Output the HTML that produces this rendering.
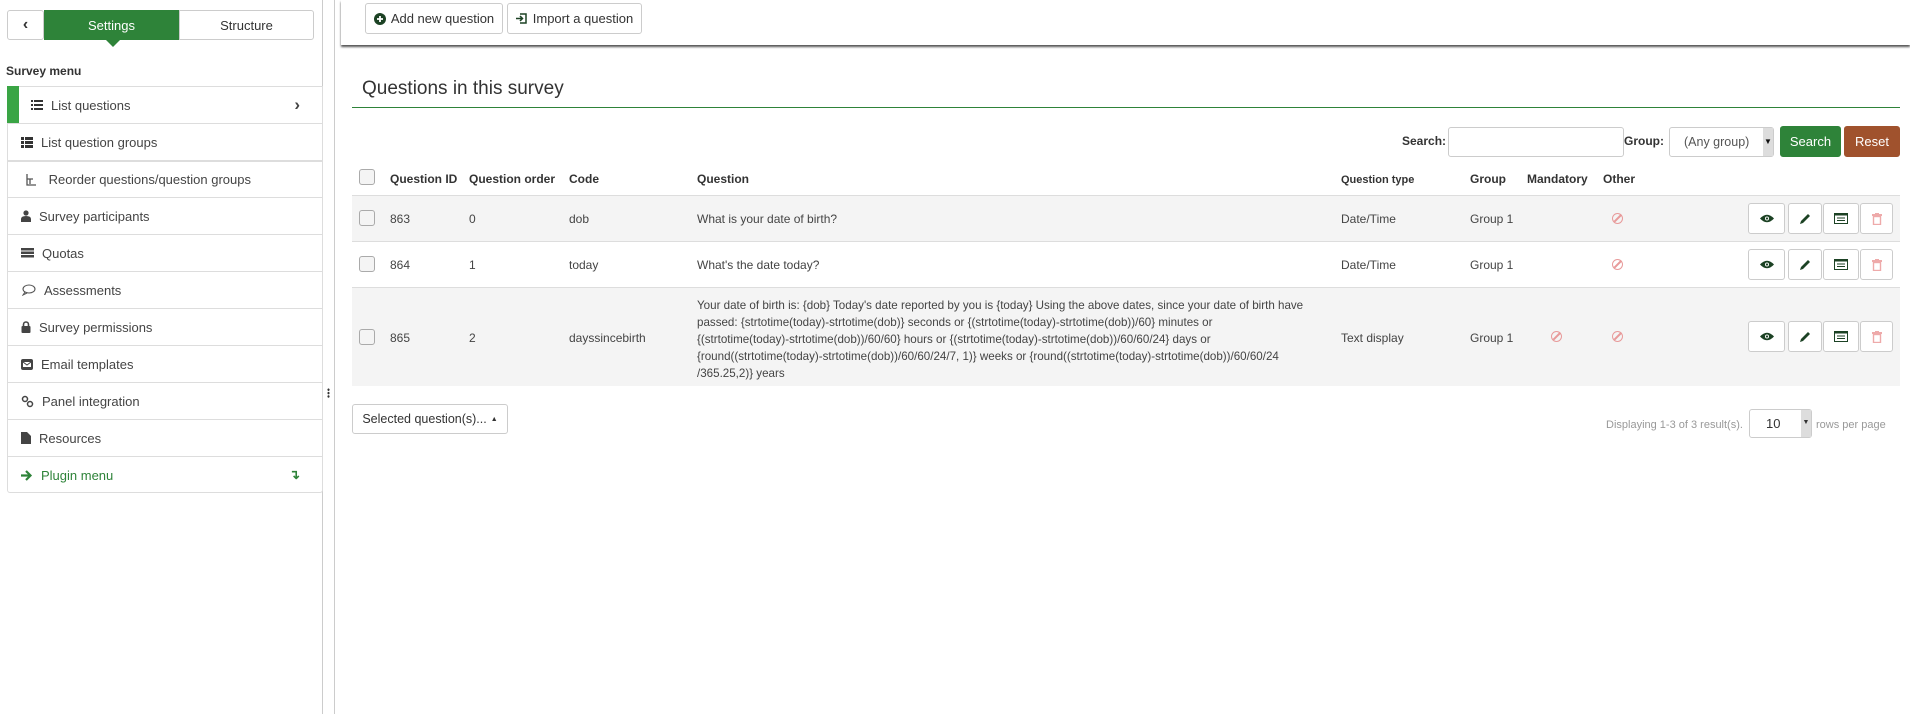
<!DOCTYPE html>
<html><head><meta charset="utf-8"><style>
*{box-sizing:border-box;margin:0;padding:0}
body{width:1910px;height:714px;background:#fff;font-family:"Liberation Sans",sans-serif;color:#333;position:relative;overflow:hidden;font-size:13px}
.a{position:absolute}
.btn{position:absolute;border:1px solid #ccc;border-radius:3px;background:#fff;display:flex;align-items:center;justify-content:center;font-size:13px;color:#333}
.mi{position:absolute;left:7px;width:315px;height:37px;border-top:1px solid #ddd;display:flex;align-items:center;padding-left:15px;font-size:13px;color:#444}
.mi svg{margin-right:8px}
.th{position:absolute;top:172px;font-weight:bold;font-size:12px;color:#333}
.row{position:absolute;left:352px;width:1548px;border-top:1px solid #ddd}
.c{position:absolute;font-size:12px;color:#444}
.cb{position:absolute;left:359px;width:16px;height:16px;border:1px solid #aaa;border-radius:3px;background:#f4f4f4}
.ab{position:absolute;height:31px;border:1px solid #ccc;border-radius:3px;background:#fff;display:flex;align-items:center;justify-content:center}
.no{position:absolute;width:11px;height:11px;border:1.5px solid #e89a9a;border-radius:50%}
.no:after{content:"";position:absolute;left:3.5px;top:-1px;width:1.5px;height:10px;background:#e89a9a;transform:rotate(45deg)}
</style></head><body>

<div class="a" style="left:322px;top:0;width:1px;height:714px;background:#ccc"></div>
<div class="a" style="left:334px;top:0;width:1px;height:714px;background:#ccc"></div>
<div class="a" style="left:327px;top:388px;width:3px;height:10px;background:radial-gradient(circle,#333 1px,transparent 1.3px) 0 0/3px 3.4px"></div>
<div class="btn" style="left:7px;top:10px;width:37px;height:30px;font-weight:bold;font-size:16px">&#8249;</div>
<div class="btn" style="left:44px;top:10px;width:135px;height:30px;background:#2e8339;border-color:#2e8339;color:#fff;border-radius:0">Settings</div>
<div class="a" style="left:106px;top:40px;width:0;height:0;border-left:7px solid transparent;border-right:7px solid transparent;border-top:7px solid #2e8339"></div>
<div class="btn" style="left:179px;top:10px;width:135px;height:30px;border-radius:0 3px 3px 0">Structure</div>
<div class="a" style="left:6px;top:64px;font-weight:bold;font-size:12px">Survey menu</div>

<div class="a" style="left:7px;top:86px;width:316px;height:407px;border:1px solid #ddd;border-top:0;border-radius:0 0 3px 3px"></div>
<div class="mi" style="top:86px;padding-left:24px"><svg width="12" height="11"><rect x="0" y="0" width="2" height="2" fill="#333"/><rect x="3" y="0" width="9" height="2" fill="#333"/><rect x="0" y="4" width="2" height="2" fill="#333"/><rect x="3" y="4" width="9" height="2" fill="#333"/><rect x="0" y="8" width="2" height="2" fill="#333"/><rect x="3" y="8" width="9" height="2" fill="#333"/></svg>List questions<span style="position:absolute;right:22px;font-weight:bold;font-size:17px">&#8250;</span></div>
<div class="a" style="left:7px;top:86px;width:12px;height:37px;background:#3aa545"></div>
<div class="mi" style="top:123px;padding-left:14px"><svg width="12" height="11"><rect x="0" y="0" width="3" height="3" fill="#333"/><rect x="4" y="0" width="8" height="3" fill="#333"/><rect x="0" y="4" width="3" height="3" fill="#333"/><rect x="4" y="4" width="8" height="3" fill="#333"/><rect x="0" y="8" width="3" height="3" fill="#333"/><rect x="4" y="8" width="8" height="3" fill="#333"/></svg>List question groups</div>
<div class="mi" style="top:160px;border-top:2px solid #ddd;padding-left:18px"><svg width="12" height="12"><path d="M2 0v11h9M2 5h6M5 5v5" stroke="#555" fill="none" stroke-width="1.3"/></svg>&nbsp;Reorder questions/question groups</div>
<div class="mi" style="top:197px;padding-left:14px"><svg width="10" height="12"><circle cx="5" cy="3" r="2.6" fill="#444"/><path d="M0 12v-3q0-3 5-3t5 3v3z" fill="#444"/></svg>Survey participants</div>
<div class="mi" style="top:234px;padding-left:14px"><svg width="13" height="10"><rect x="0" y="0" width="13" height="2.5" fill="#444"/><rect x="0" y="3.5" width="13" height="2.5" fill="#444"/><rect x="0" y="7" width="13" height="2.5" fill="#444"/></svg>Quotas</div>
<div class="mi" style="top:271px;padding-left:15px"><svg width="14" height="12"><ellipse cx="7" cy="5" rx="6" ry="4" fill="none" stroke="#555" stroke-width="1.1"/><path d="M3 8l-2 3 4-2" fill="none" stroke="#555"/></svg>Assessments</div>
<div class="mi" style="top:308px;padding-left:14px"><svg width="10" height="12"><path d="M2.5 5V3.5a2.5 2.5 0 0 1 5 0V5" fill="none" stroke="#444" stroke-width="1.6"/><rect x="0.5" y="5" width="9" height="7" rx="1" fill="#444"/></svg>Survey permissions</div>
<div class="mi" style="top:345px;padding-left:14px"><svg width="12" height="11"><rect x="0" y="0" width="12" height="11" rx="2" fill="#444"/><rect x="2" y="3" width="8" height="5" fill="#fff"/><path d="M2 3l4 3 4-3" stroke="#444" fill="none"/></svg>Email templates</div>
<div class="mi" style="top:382px;padding-left:14px"><svg width="13" height="13"><circle cx="4" cy="4" r="2.5" fill="none" stroke="#444" stroke-width="1.5"/><circle cx="9" cy="9" r="2.5" fill="none" stroke="#444" stroke-width="1.5"/></svg>Panel integration</div>
<div class="mi" style="top:419px;padding-left:14px"><svg width="10" height="12"><path d="M0 0h6l4 4v8H0z" fill="#444"/></svg>Resources</div>
<div class="mi" style="top:456px;padding-left:14px;color:#2e8339"><svg width="12" height="11"><path d="M0 5.5h9M5 1l4.5 4.5L5 10" stroke="#2e8339" stroke-width="2.2" fill="none"/></svg>Plugin menu<span style="position:absolute;right:22px;font-weight:bold;font-size:13px">&#8628;</span></div>

<div class="a" style="left:341px;top:0;width:1569px;height:45px;background:#fff;box-shadow:0 2px 2px #555"></div>
<div class="btn" style="left:365px;top:3px;width:138px;height:31px"><svg width="12" height="12" style="margin-right:5px"><circle cx="6" cy="6" r="6" fill="#1c4224"/><path d="M6 3v6M3 6h6" stroke="#fff" stroke-width="1.8"/></svg>Add new question</div>
<div class="btn" style="left:507px;top:3px;width:135px;height:31px"><svg width="12" height="13" style="margin-right:5px"><path d="M4 2h6v9H4" fill="none" stroke="#1c4224" stroke-width="1.5"/><path d="M0 6.5h6M4 4l2.5 2.5L4 9" stroke="#1c4224" stroke-width="1.5" fill="none"/></svg>Import a question</div>

<div class="a" style="left:362px;top:78px;font-size:19px;font-weight:500;color:#333">Questions in this survey</div>
<div class="a" style="left:352px;top:107px;width:1548px;height:1px;background:#2e8339"></div>

<div class="a" style="left:1402px;top:134px;font-weight:bold;font-size:12px">Search:</div>
<div class="a" style="left:1448px;top:127px;width:176px;height:30px;border:1px solid #ccc;border-radius:3px"></div>
<div class="a" style="left:1624px;top:134px;font-weight:bold;font-size:12px">Group:</div>
<div class="a" style="left:1669px;top:127px;width:105px;height:30px;border:1px solid #ccc;border-radius:3px;font-size:12.5px;color:#555;padding:7px 0 0 14px">(Any group)<span style="position:absolute;right:0;top:0;width:10px;height:28px;background:#ddd;font-size:8px;padding-top:9px;text-align:center;color:#111">&#9660;</span></div>
<div class="btn" style="left:1780px;top:126px;width:61px;height:31px;background:#2e8339;border-color:#2e8339;color:#fff;font-size:13px">Search</div>
<div class="btn" style="left:1844px;top:126px;width:56px;height:31px;background:#a0522d;border-color:#a0522d;color:#fff;font-size:13px">Reset</div>

<div class="cb" style="top:169px"></div>
<div class="th" style="left:390px">Question ID</div>
<div class="th" style="left:469px">Question order</div>
<div class="th" style="left:569px">Code</div>
<div class="th" style="left:697px">Question</div>
<div class="th" style="left:1341px;font-size:11px;top:174px">Question type</div>
<div class="th" style="left:1470px">Group</div>
<div class="th" style="left:1527px">Mandatory</div>
<div class="th" style="left:1603px">Other</div>

<div class="row" style="top:195px;height:46px;background:#f4f4f4"></div>
<div class="row" style="top:241px;height:46px;background:#fff"></div>
<div class="row" style="top:287px;height:99px;background:#f4f4f4"></div>

<div class="cb" style="top:210px"></div>
<div class="c" style="left:390px;top:212px">863</div><div class="c" style="left:469px;top:212px">0</div><div class="c" style="left:569px;top:212px">dob</div><div class="c" style="left:697px;top:212px">What is your date of birth?</div><div class="c" style="left:1341px;top:212px">Date/Time</div><div class="c" style="left:1470px;top:212px">Group 1</div><div class="no" style="left:1612px;top:213px"></div>

<div class="cb" style="top:256px"></div>
<div class="c" style="left:390px;top:258px">864</div><div class="c" style="left:469px;top:258px">1</div><div class="c" style="left:569px;top:258px">today</div><div class="c" style="left:697px;top:258px">What's the date today?</div><div class="c" style="left:1341px;top:258px">Date/Time</div><div class="c" style="left:1470px;top:258px">Group 1</div><div class="no" style="left:1612px;top:259px"></div>

<div class="cb" style="top:329px"></div>
<div class="c" style="left:390px;top:331px">865</div><div class="c" style="left:469px;top:331px">2</div><div class="c" style="left:569px;top:331px">dayssincebirth</div>
<div class="c" style="left:697px;top:297px;font-size:11.6px;line-height:17px;white-space:nowrap">Your date of birth is: {dob} Today's date reported by you is {today} Using the above dates, since your date of birth have<br>passed: {strtotime(today)-strtotime(dob)} seconds or {(strtotime(today)-strtotime(dob))/60} minutes or<br>{(strtotime(today)-strtotime(dob))/60/60} hours or {(strtotime(today)-strtotime(dob))/60/60/24} days or<br>{round((strtotime(today)-strtotime(dob))/60/60/24/7, 1)} weeks or {round((strtotime(today)-strtotime(dob))/60/60/24<br>/365.25,2)} years</div>
<div class="c" style="left:1341px;top:331px">Text display</div><div class="c" style="left:1470px;top:331px">Group 1</div><div class="no" style="left:1551px;top:331px"></div><div class="no" style="left:1612px;top:331px"></div>

<div style="position:absolute;left:0;top:203px">
 <div class="ab" style="left:1748px;width:37px"><svg width="14" height="9"><path d="M0 4.5Q7 -3 14 4.5Q7 12 0 4.5z" fill="#1c4224"/><circle cx="7" cy="4.5" r="2" fill="#fff"/><circle cx="7" cy="4.5" r="1.1" fill="#1c4224"/></svg></div>
 <div class="ab" style="left:1788px;width:34px"><svg width="12" height="12"><path d="M1 11l1-3 7-7 2 2-7 7z" fill="#1c4224"/></svg></div>
 <div class="ab" style="left:1823px;width:36px"><svg width="14" height="11"><rect x="0.5" y="0.5" width="13" height="10" fill="#fff" stroke="#1c4224"/><rect x="0" y="0" width="14" height="2.5" fill="#1c4224"/><path d="M3 5h8M3 7.5h8" stroke="#1c4224"/></svg></div>
 <div class="ab" style="left:1860px;width:33px"><svg width="10" height="12"><rect x="0" y="1" width="10" height="2" fill="#eaa"/><rect x="3" y="0" width="4" height="1.5" fill="#eaa"/><rect x="1.5" y="3.5" width="7" height="8" fill="none" stroke="#eaa" stroke-width="1.4"/></svg></div>
</div>
<div style="position:absolute;left:0;top:249px">
 <div class="ab" style="left:1748px;width:37px"><svg width="14" height="9"><path d="M0 4.5Q7 -3 14 4.5Q7 12 0 4.5z" fill="#1c4224"/><circle cx="7" cy="4.5" r="2" fill="#fff"/><circle cx="7" cy="4.5" r="1.1" fill="#1c4224"/></svg></div>
 <div class="ab" style="left:1788px;width:34px"><svg width="12" height="12"><path d="M1 11l1-3 7-7 2 2-7 7z" fill="#1c4224"/></svg></div>
 <div class="ab" style="left:1823px;width:36px"><svg width="14" height="11"><rect x="0.5" y="0.5" width="13" height="10" fill="#fff" stroke="#1c4224"/><rect x="0" y="0" width="14" height="2.5" fill="#1c4224"/><path d="M3 5h8M3 7.5h8" stroke="#1c4224"/></svg></div>
 <div class="ab" style="left:1860px;width:33px"><svg width="10" height="12"><rect x="0" y="1" width="10" height="2" fill="#eaa"/><rect x="3" y="0" width="4" height="1.5" fill="#eaa"/><rect x="1.5" y="3.5" width="7" height="8" fill="none" stroke="#eaa" stroke-width="1.4"/></svg></div>
</div>
<div style="position:absolute;left:0;top:321px">
 <div class="ab" style="left:1748px;width:37px"><svg width="14" height="9"><path d="M0 4.5Q7 -3 14 4.5Q7 12 0 4.5z" fill="#1c4224"/><circle cx="7" cy="4.5" r="2" fill="#fff"/><circle cx="7" cy="4.5" r="1.1" fill="#1c4224"/></svg></div>
 <div class="ab" style="left:1788px;width:34px"><svg width="12" height="12"><path d="M1 11l1-3 7-7 2 2-7 7z" fill="#1c4224"/></svg></div>
 <div class="ab" style="left:1823px;width:36px"><svg width="14" height="11"><rect x="0.5" y="0.5" width="13" height="10" fill="#fff" stroke="#1c4224"/><rect x="0" y="0" width="14" height="2.5" fill="#1c4224"/><path d="M3 5h8M3 7.5h8" stroke="#1c4224"/></svg></div>
 <div class="ab" style="left:1860px;width:33px"><svg width="10" height="12"><rect x="0" y="1" width="10" height="2" fill="#eaa"/><rect x="3" y="0" width="4" height="1.5" fill="#eaa"/><rect x="1.5" y="3.5" width="7" height="8" fill="none" stroke="#eaa" stroke-width="1.4"/></svg></div>
</div>

<div class="btn" style="left:352px;top:404px;width:156px;height:30px;font-size:12.5px">Selected question(s)... <span style="font-size:7px;margin-left:4px">&#9650;</span></div>
<div class="a" style="left:1606px;top:419px;font-size:11px;color:#999">Displaying 1-3 of 3 result(s).</div>
<div class="a" style="left:1749px;top:409px;width:63px;height:29px;border:1px solid #ccc;border-radius:3px;font-size:13px;padding:6px 0 0 16px">10<span style="position:absolute;right:0;top:0;width:10px;height:27px;background:#ddd;font-size:7px;padding-top:9px;text-align:center">&#9660;</span></div>
<div class="a" style="left:1816px;top:419px;font-size:11px;color:#999">rows per page</div>
</body></html>
